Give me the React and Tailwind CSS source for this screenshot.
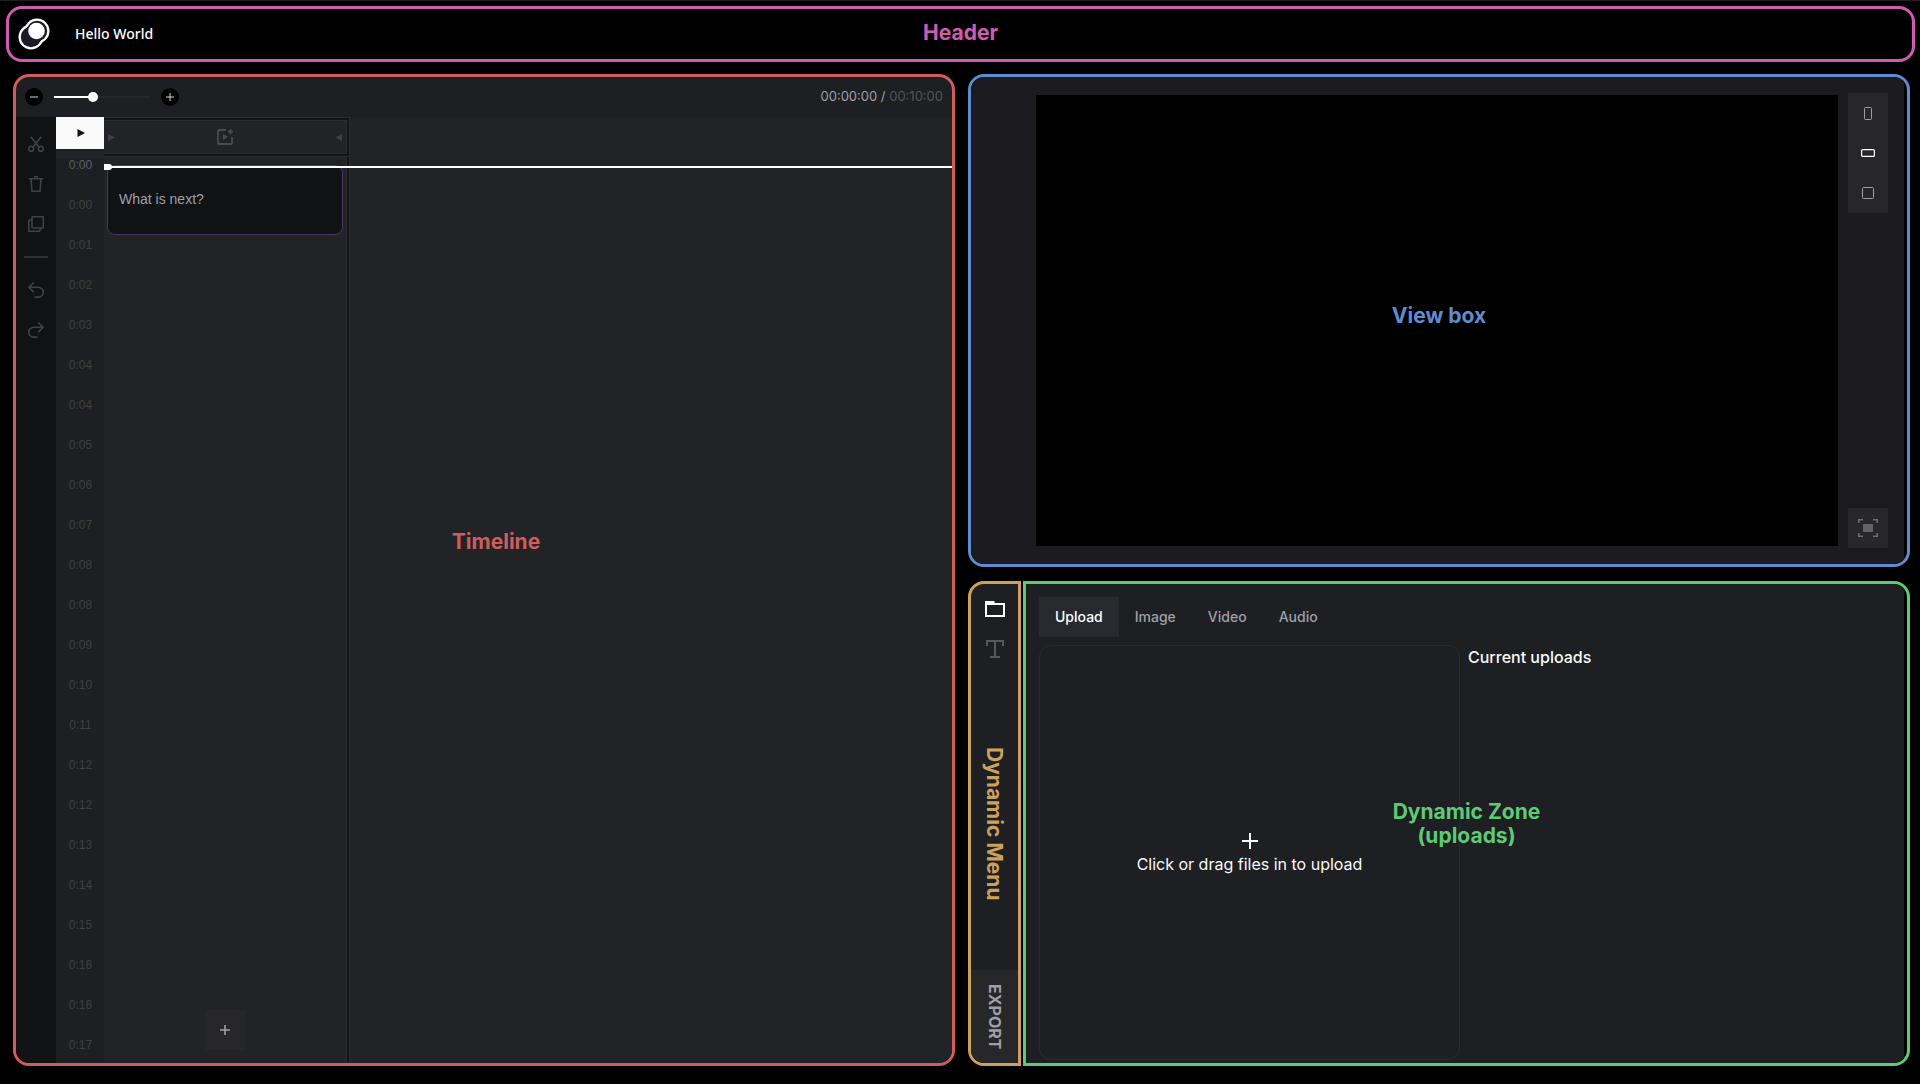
import React from "react";

const TIMES = [
  "0:00", "0:00", "0:01", "0:02", "0:03", "0:04", "0:04", "0:05",
  "0:06", "0:07", "0:08", "0:08", "0:09", "0:10", "0:11", "0:12",
  "0:12", "0:13", "0:14", "0:15", "0:16", "0:16", "0:17",
];

function Icon({ children, size = "size-4", box = "0 0 16 16", width = 1.6 }) {
  return (
    <svg className={size} viewBox={box} fill="none" stroke="currentColor" strokeWidth={width} aria-hidden="true">
      {children}
    </svg>
  );
}

function Logo() {
  return (
    <svg className="size-8" viewBox="0 0 32 32" aria-hidden="true">
      <g fill="#fff" stroke="#fff">
        <circle cx="19" cy="13" r="12.5" stroke="none" />
        <circle cx="13" cy="19" r="12.5" stroke="none" />
        <path d="M13 19 19 13" strokeWidth="23.5" />
      </g>
      <g fill="#1b1b28" stroke="#1b1b28">
        <circle cx="19" cy="13" r="10.2" stroke="none" />
        <circle cx="13" cy="19" r="10.2" stroke="none" />
        <path d="M13 19 19 13" strokeWidth="19" />
      </g>
      <circle cx="18.5" cy="13" r="8.3" fill="#fff" />
    </svg>
  );
}

const tools = [
  {
    name: "Cut",
    art: (
      <>
        <circle cx="3.2" cy="12.8" r="2.5" />
        <circle cx="12.8" cy="12.8" r="2.5" />
        <path d="M2.8.8 11 11M13.2.8 5 11" />
      </>
    ),
  },
  { name: "Delete", art: <path d="M1 2.7h14M6 .7h4M3 2.7l1 12.6h8l1-12.6" /> },
  {
    name: "Duplicate",
    art: (
      <>
        <rect x="4" y=".7" width="11.3" height="11.3" rx="1" />
        <path d="M4 4H1.8A1.1 1.1 0 0 0 .7 5.1v9.1a1.1 1.1 0 0 0 1.1 1.1h9.1a1.1 1.1 0 0 0 1.1-1.1V12" />
      </>
    ),
  },
];

const history = [
  { name: "Undo", art: <path d="M5.2 1 .9 5.3l4.3 4.3M1 5.3h9.4a4.9 4.9 0 0 1 0 9.8H7" strokeLinecap="round" /> },
  { name: "Redo", art: <path d="m10.8 1 4.3 4.3-4.3 4.3M15 5.3H5.6a4.9 4.9 0 0 0 0 9.8H9" strokeLinecap="round" /> },
];

function ToolButton({ tool }) {
  return (
    <button type="button" aria-label={tool.name} className="flex size-10 items-center justify-center">
      <Icon>{tool.art}</Icon>
    </button>
  );
}

function ZoomButton({ label, path }) {
  return (
    <button type="button" aria-label={label} className="flex size-[18px] items-center justify-center rounded-full bg-black text-zinc-300">
      <Icon size="size-2" box="0 0 8 8" width={1}>
        <path d={path} />
      </Icon>
    </button>
  );
}

function Timeline() {
  return (
    <section className="relative flex min-h-0 flex-col overflow-hidden rounded-2xl border-3 border-[#d05c5c] bg-[#1e1f22]">
      <div className="flex h-10 shrink-0 items-center justify-between px-[9px]">
        <div className="flex items-center gap-[11px]">
          <ZoomButton label="Zoom out" path="M0 4h8" />
          <input
            type="range"
            aria-label="Zoom"
            min="0"
            max="100"
            defaultValue="39"
            className="h-[2px] w-24 appearance-none bg-[linear-gradient(to_right,#fff_41%,#27272a_41%)] [&::-webkit-slider-thumb]:size-[10px] [&::-webkit-slider-thumb]:appearance-none [&::-webkit-slider-thumb]:rounded-full [&::-webkit-slider-thumb]:bg-white"
          />
          <ZoomButton label="Zoom in" path="M0 4h8M4 0v8" />
        </div>
        <p className="text-[13px] text-zinc-400">
          00:00:00 / <span className="text-zinc-600">00:10:00</span>
        </p>
      </div>

      <div className="flex min-h-0 flex-1">
        <div className="flex w-10 shrink-0 flex-col bg-[#111214] pt-[7px] text-[#3f4246]">
          {tools.map((t) => <ToolButton key={t.name} tool={t} />)}
          <hr className="mx-2 my-3 border-t-2 border-[#303134]" />
          {history.map((t) => <ToolButton key={t.name} tool={t} />)}
        </div>

        <div className="flex w-12 shrink-0 flex-col overflow-hidden">
          <button type="button" aria-label="Play" className="flex h-8 shrink-0 items-center justify-center bg-[#fafafa] pl-px">
            <svg className="size-2" viewBox="0 0 8 8" aria-hidden="true"><path d="M.5 0 8 4 .5 8z" fill="#111" /></svg>
          </button>
          <ol className="border-t-10 border-[#212226] text-center font-['Liberation_Sans',Arial,sans-serif] text-xs leading-3 text-[#3f4043]">
            {TIMES.map((t, i) => (
              <li key={i} className="h-10 pl-px first:text-[#5e6066]">{t}</li>
            ))}
          </ol>
        </div>

        <div className="relative flex min-w-0 flex-1 bg-[#222327]">
          <div className="flex w-[246px] flex-col">
            <div className="flex h-10 shrink-0 flex-col border-y border-r border-[#2c2d30]">
              <div className="flex flex-1 border-y-2 border-r-2 border-[#121315]">
                <div className="flex flex-1 items-center justify-between border border-l-0 border-[#2c2d30] px-1 text-[#4a4b4f]">
                  <svg className="size-[7px]" viewBox="0 0 7 7" aria-hidden="true"><path d="M0 0 7 3.5 0 7z" fill="#3f4043" /></svg>
                  <button type="button" aria-label="Add clip">
                    <Icon width={1.8}>
                      <path d="M9 1H2a1 1 0 0 0-1 1v12a1 1 0 0 0 1 1h12a1 1 0 0 0 1-1V8M13.5.2v5M11 2.7h5" />
                      <path d="M6 5v6l5-3z" fill="currentColor" stroke="none" />
                    </Icon>
                  </button>
                  <svg className="size-[7px]" viewBox="0 0 7 7" aria-hidden="true"><path d="M7 0 0 3.5 7 7z" fill="#3f4043" /></svg>
                </div>
              </div>
            </div>
            <div className="flex flex-1 border-r border-[#2c2d30]">
              <div className="flex flex-1 border-r-2 border-[#121315]">
                <div className="flex flex-1 flex-col justify-between border-r border-[#2c2d30] px-[3px] pt-2 pb-[13px]">
                  <div className="flex h-[70px] items-center rounded-lg border border-[#4b3563] bg-[#111214] px-[11px] pb-[2px] font-['Liberation_Sans',Arial,sans-serif] text-sm text-zinc-400">
                    What is next?
                  </div>
                  <button type="button" aria-label="Add element" className="flex size-10 items-center justify-center self-center bg-[#272729] text-zinc-400">
                    <Icon size="size-[10px]" box="0 0 10 10" width={1.6}>
                      <path d="M0 5h10M5 0v10" />
                    </Icon>
                  </button>
                </div>
              </div>
            </div>
          </div>
          <div className="absolute inset-x-0 top-[47px] flex h-[6px] items-center">
            <div className="h-[6px] w-2 rounded-r-sm bg-white" />
            <div className="h-[2px] flex-1 bg-white" />
          </div>
        </div>
      </div>
      <h2 className="pointer-events-none absolute inset-0 flex items-center justify-center pb-14 pl-6 text-[21px] font-bold text-[#d05c5c]">Timeline</h2>
    </section>
  );
}

function ViewBox() {
  return (
    <section className="relative overflow-hidden rounded-2xl border-3 border-[#5f8bd0] bg-black">
      <div className="mr-[3px] flex items-center gap-[10px] bg-[#1c1b1f] py-4 pr-4 pl-[65px]">
        <div className="my-[2px] aspect-video flex-1 bg-black" />
        <div className="flex flex-col justify-between self-stretch text-zinc-400">
          <div className="flex flex-col bg-[#272729]">
            <button type="button" aria-label="Portrait" className="flex size-10 items-center justify-center">
              <Icon width={1}><rect x="4.5" y="2.5" width="7" height="12" rx="1" /></Icon>
            </button>
            <button type="button" aria-label="Landscape" className="flex size-10 items-center justify-center text-white">
              <Icon width={1.2}><rect x="1.6" y="4.6" width="12.8" height="6.8" rx="1" /></Icon>
            </button>
            <button type="button" aria-label="Square" className="flex size-10 items-center justify-center">
              <Icon width={1}><rect x="2.5" y="2.5" width="11" height="11" rx="1" /></Icon>
            </button>
          </div>
          <button type="button" aria-label="Fullscreen" className="flex size-10 items-center justify-center bg-[#272729] text-[#6f6f73]">
            <Icon size="size-5" box="0 0 20 20" width={1.5}>
              <path d="M.8 5V1.8H5M15 1.8h4.2V5M.8 15v3.2H5M15 18.2h4.2V15" />
              <rect x="5" y="6" width="10" height="8" fill="#636366" stroke="none" />
            </Icon>
          </button>
        </div>
      </div>
      <h2 className="pointer-events-none absolute inset-0 flex items-center justify-center pb-[10px] text-[21px] font-bold text-[#5f8bd0]">View box</h2>
    </section>
  );
}

function DynamicMenu() {
  return (
    <nav className="relative flex w-[53px] shrink-0 flex-col items-center justify-between overflow-hidden rounded-l-2xl border-3 border-[#cda05b] bg-[#1e1f22]">
      <div className="flex flex-col pt-[5px]">
        <button type="button" aria-label="Files" className="flex size-10 items-center justify-center text-white">
          <Icon size="size-5" box="0 0 20 20" width={2}>
            <path d="M1 3v14h18V5H1" />
            <path d="M0 2h9.5v3.5H0z" fill="currentColor" stroke="none" />
          </Icon>
        </button>
        <button type="button" aria-label="Text" className="flex size-10 items-center justify-center text-[#57585b]">
          <Icon size="size-[18px]" box="0 0 18 18" width={2}>
            <path d="M1 6V1h16v5M9 1v15.5M4 17h10" />
          </Icon>
        </button>
      </div>
      <button type="button" className="flex h-[93px] w-full items-center justify-center bg-[#27272a] font-bold text-zinc-400 [writing-mode:vertical-rl]">
        EXPORT
      </button>
      <h2 className="pointer-events-none absolute inset-0 flex items-center justify-center text-[21px] font-bold text-[#cda05b] [writing-mode:vertical-rl]">Dynamic Menu</h2>
    </nav>
  );
}

function DynamicZone() {
  return (
    <section className="relative flex min-w-0 flex-1 flex-col overflow-hidden rounded-r-2xl border-3 border-[#5dcb75] bg-black">
      <div className="mr-[3px] flex flex-1 flex-col bg-[#1e1f22] pt-[13px] pr-[15px] pb-[3px] pl-[13px]">
        <div role="tablist" className="flex text-sm font-medium text-zinc-400">
          {["Upload", "Image", "Video", "Audio"].map((t, i) => (
            <button key={t} type="button" role="tab" aria-selected={i === 0} className="h-10 px-4 aria-selected:bg-[#292a2f] aria-selected:text-white">
              {t}
            </button>
          ))}
        </div>
        <div className="mt-2 grid flex-1 grid-cols-2 gap-2 text-zinc-50">
          <button type="button" className="flex flex-col items-center justify-center gap-[3px] rounded-xl border border-[#2a2b2f] pt-1">
            <Icon width={2}><path d="M0 8h16M8 0v16" /></Icon>
            <span className="leading-6">Click or drag files in to upload</span>
          </button>
          <h3 className="leading-6 font-medium">Current uploads</h3>
        </div>
      </div>
      <h2 className="pointer-events-none absolute inset-0 flex items-center justify-center text-center text-[21px] leading-6 font-bold text-[#5dcb75]">
        <span>Dynamic Zone<br />(uploads)</span>
      </h2>
    </section>
  );
}

export default function App() {
  return (
    <div className="flex h-screen flex-col border-t border-[#1e1f22] bg-black pb-[18px] font-['Inter',sans-serif]">
      <header className="relative mt-[5px] mr-[5px] ml-[6px] flex h-14 shrink-0 items-center rounded-2xl border-3 border-[#d05cb0] pb-px pl-[9px]">
        <Logo />
        <a href="#project" className="ml-[25px] font-['Noto_Sans',sans-serif] text-sm font-medium text-white">Hello World</a>
        <h1 className="pointer-events-none absolute inset-0 flex items-center justify-center pb-[2px] text-[21px] font-bold text-[#d05cb0]">Header</h1>
      </header>
      <main className="mt-3 mr-[10px] ml-[13px] grid min-h-0 flex-1 grid-cols-2 gap-[13px]">
        <Timeline />
        <div className="flex min-h-0 min-w-0 flex-col gap-[14px]">
          <ViewBox />
          <div className="flex min-h-0 flex-1 gap-[2px]">
            <DynamicMenu />
            <DynamicZone />
          </div>
        </div>
      </main>
    </div>
  );
}
